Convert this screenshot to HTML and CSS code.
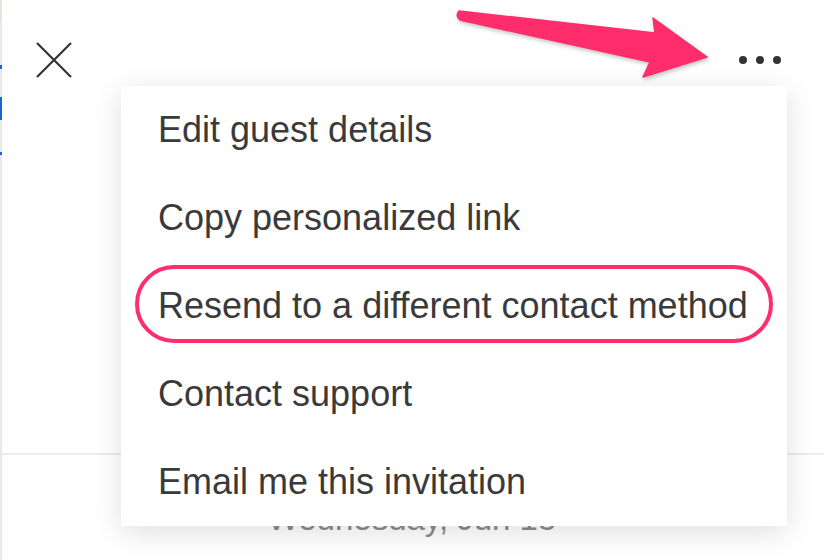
FILE: index.html
```html
<!DOCTYPE html>
<html lang="en">
<head>
    <meta charset="UTF-8">
    <meta name="viewport" content="width=device-width, initial-scale=1.0">
    <title>Guest options</title>
    <link rel="stylesheet" href="styles.css">
</head>
<body>
    <div class="page">
        <div class="edge"></div>

        <div class="panel">
            <div class="topbar">
                <button class="icon-btn close-btn" aria-label="Close">
                    <svg width="36" height="36" viewBox="0 0 36 36">
                        <path d="M1 1 L35 35 M35 1 L1 35" stroke="#333" stroke-width="2.2" fill="none"/>
                    </svg>
                </button>
                <button class="icon-btn more-btn" aria-label="More options">
                    <svg width="42" height="10" viewBox="0 0 42 10">
                        <circle cx="4" cy="5" r="4" fill="#333"/>
                        <circle cx="21" cy="5" r="4" fill="#333"/>
                        <circle cx="38" cy="5" r="4" fill="#333"/>
                    </svg>
                </button>
            </div>

            <div class="sheet">
                <p class="event-date">Wednesday, Jun 15</p>
            </div>
        </div>

        <!-- dropdown opened from the ... button -->
        <ul class="menu">
            <li class="menu-item">Edit guest details</li>
            <li class="menu-item">Copy personalized link</li>
            <li class="menu-item marked">Resend to a different contact method</li>
            <li class="menu-item">Contact support</li>
            <li class="menu-item">Email me this invitation</li>
        </ul>

        <svg class="pointer-arrow" width="824" height="100" viewBox="0 0 824 100">
            <path d="M459 11 L655 33 L653 18 L707 57 L643 77 L650 62 L460 20 Q455 16 459 11 Z" fill="#ff2d6b" stroke="#ff2d6b" stroke-width="1.5" stroke-linejoin="round"/>
        </svg>
    </div>
</body>
</html>
```

FILE: styles.css
```css
body {
    margin: 0;
    font-family: "Liberation Sans", Arial, sans-serif;
    background: #fff;
}
.page {
    position: relative;
    width: 824px;
    height: 560px;
    overflow: hidden;
    display: flex;
}
.edge {
    width: 2px;
    flex-shrink: 0;
    background: linear-gradient(to bottom,
        #e6e2dc 0, #e6e2dc 22px,
        #e8e8e8 22px, #e8e8e8 65px,
        #1a66d0 65px, #1a66d0 69px,
        #e8e8e8 69px, #e8e8e8 97px,
        #1a66d0 97px, #1a66d0 120px,
        #e8e8e8 120px, #e8e8e8 152px,
        #1a66d0 152px, #1a66d0 155px,
        #e8e8e8 155px);
}
.panel {
    flex: 1;
    display: flex;
    flex-direction: column;
}
.topbar {
    display: flex;
    justify-content: space-between;
    align-items: center;
    padding: 42px 43px 0 34px;
}
.icon-btn {
    background: none;
    border: none;
    padding: 0;
    display: block;
    cursor: pointer;
}
.icon-btn svg {
    display: block;
}
.sheet {
    margin-top: 375px;
    border-top: 2px solid #ececec;
    padding-top: 44px;
}
.event-date {
    margin: 0;
    text-align: center;
    font-size: 33px;
    line-height: 40px;
    color: #8a8a8a;
    padding-right: 2px;
}
.menu {
    position: absolute;
    left: 121px;
    top: 86px;
    width: 666px;
    margin: 0;
    padding: 0;
    list-style: none;
    background: #fff;
    box-shadow: 0 6px 28px rgba(0,0,0,0.13);
}
.menu-item {
    position: relative;
    height: 88px;
    line-height: 88px;
    padding-left: 37px;
    font-size: 36px;
    color: #3a3a3a;
    white-space: nowrap;
}
.menu-item.marked::before {
    content: "";
    position: absolute;
    top: 3px;
    bottom: 7px;
    left: 14px;
    right: 14px;
    border: 4px solid #ff2d6b;
    border-radius: 40px;
}
.pointer-arrow {
    position: absolute;
    left: 0;
    top: 0;
    filter: drop-shadow(1px 2px 2px rgba(0,0,0,0.25));
}
```
